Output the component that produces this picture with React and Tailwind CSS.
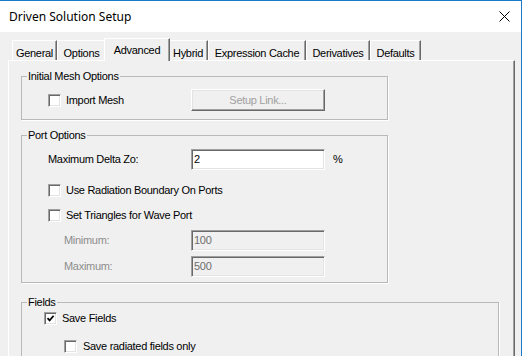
import React from 'react';

const tabs = [
  { name: 'General', w: 'w-[45px]' },
  { name: 'Options', w: 'w-[49px]' },
  { name: 'Advanced', w: 'w-[66px]', active: true },
  { name: 'Hybrid', w: 'w-[40px]' },
  { name: 'Expression Cache', w: 'w-[98px]' },
  { name: 'Derivatives', w: 'w-[64px]' },
  { name: 'Defaults', w: 'w-[51px]' },
];

const CheckBox = ({ checked }) => (
  <span className="w-[13px] h-[13px] shrink-0 bg-white border border-t-[#a0a0a0] border-l-[#a0a0a0] border-b-white border-r-white shadow-[inset_1px_1px_0_#696969,inset_-1px_-1px_0_#e3e3e3] flex items-center justify-center">
    {checked && (
      <svg width="9" height="9" viewBox="0 0 9 9">
        <path d="M1.5 4.2 L3.6 6.4 L7.6 1.8" fill="none" stroke="#000" strokeWidth="1.7" />
      </svg>
    )}
  </span>
);

const Field = ({ value, disabled }) => (
  <div
    className={`w-[134px] h-[21px] border border-t-[#a0a0a0] border-l-[#a0a0a0] border-b-white border-r-white shadow-[inset_1px_1px_0_#696969,inset_-1px_-1px_0_#e3e3e3] pl-[2px] flex items-center ${
      disabled ? 'bg-[#f0f0f0] text-[#6d6d6d]' : 'bg-white text-black'
    }`}
  >
    {value}
  </div>
);

const Group = ({ title, width, children }) => (
  <fieldset className={`${width} border border-[#b9b9b9] shadow-[1px_1px_0_#fff]`}>
    <legend className="ml-[5px] px-[1px] leading-[13px]">{title}</legend>
    {children}
  </fieldset>
);

export default function App() {
  return (
    <div className="w-[522px] h-[356px] overflow-hidden bg-[#f0f0f0] border-t border-r border-[#1979ca] flex flex-col font-[Liberation_Sans,Arial,sans-serif] text-[11px] tracking-[-0.3px] text-black">
      {/* title bar */}
      <div className="h-[31px] bg-white flex items-center justify-between pl-[9px] pr-[11px] shrink-0">
        <span className="font-[Segoe_UI,Noto_Sans,sans-serif] text-[12px] tracking-normal">Driven Solution Setup</span>
        <svg width="11" height="11" viewBox="0 0 11 11">
          <path d="M0.5 0.5 L10.5 10.5 M10.5 0.5 L0.5 10.5" stroke="#000" strokeWidth="1" />
        </svg>
      </div>

      {/* tabs */}
      <div className="h-[28px] shrink-0 flex items-end pl-[12px]">
        {tabs.map((t) =>
          t.active ? (
            <div
              key={t.name}
              className={`${t.w} -mx-[2px] -mb-[1px] h-[23px] relative z-10 bg-[#f0f0f0] border-t border-l border-white border-r border-r-[#696969] shadow-[inset_-1px_0_0_#a0a0a0] flex justify-center pt-[3px]`}
            >
              {t.name}
            </div>
          ) : (
            <div
              key={t.name}
              className={`${t.w} h-[20px] border-t border-l border-white border-r border-r-[#696969] shadow-[inset_-1px_0_0_#a0a0a0] flex justify-center pt-[4px]`}
            >
              {t.name}
            </div>
          )
        )}
      </div>

      {/* panel */}
      <div className="flex-1 ml-[8px] w-[507px] border-t border-l border-white border-r border-r-[#696969] shadow-[inset_-1px_0_0_#a0a0a0] pl-[12px] pt-[9px]">
        <Group title="Initial Mesh Options" width="w-[367px]">
          <div className="pl-[26px] pt-[6px] pb-[8px] flex items-center">
            <div className="w-[143px] flex items-center">
              <CheckBox />
              <span className="ml-[5px] leading-[13px]">Import Mesh</span>
            </div>
            <div className="w-[134px] h-[22px] border border-t-white border-l-white border-b-[#696969] border-r-[#696969] shadow-[inset_-1px_-1px_0_#a0a0a0,inset_1px_1px_0_#e3e3e3] flex items-center justify-center text-[#a0a0a0]">
              Setup Link...
            </div>
          </div>
        </Group>

        <div className="mt-[9px]">
          <Group title="Port Options" width="w-[367px]">
            <div className="pl-[26px] pt-[7px] pb-[5px] flex flex-col">
              <div className="flex items-center h-[21px]">
                <span className="w-[143px]">Maximum Delta Zo:</span>
                <Field value="2" />
                <span className="ml-[8px]">%</span>
              </div>
              <div className="mt-[14px] flex items-center h-[13px]">
                <CheckBox />
                <span className="ml-[5px]">Use Radiation Boundary On Ports</span>
              </div>
              <div className="mt-[12px] flex items-center h-[13px]">
                <CheckBox />
                <span className="ml-[5px]">Set Triangles for Wave Port</span>
              </div>
              <div className="mt-[8px] flex items-center h-[21px]">
                <span className="w-[143px] pl-[16px] text-[#8d8d8d]">Minimum:</span>
                <Field value="100" disabled />
              </div>
              <div className="mt-[5px] flex items-center h-[21px]">
                <span className="w-[143px] pl-[16px] text-[#8d8d8d]">Maximum:</span>
                <Field value="500" disabled />
              </div>
            </div>
          </Group>
        </div>

        <div className="mt-[13px]">
          <Group title="Fields" width="w-[478px]">
            <div className="pt-[3px] pb-[40px] flex flex-col">
              <div className="pl-[22px] flex items-center h-[13px]">
                <CheckBox checked />
                <span className="ml-[5px]">Save Fields</span>
              </div>
              <div className="pl-[42px] mt-[15px] flex items-center h-[13px]">
                <CheckBox />
                <span className="ml-[6px]">Save radiated fields only</span>
              </div>
            </div>
          </Group>
        </div>
      </div>
    </div>
  );
}
